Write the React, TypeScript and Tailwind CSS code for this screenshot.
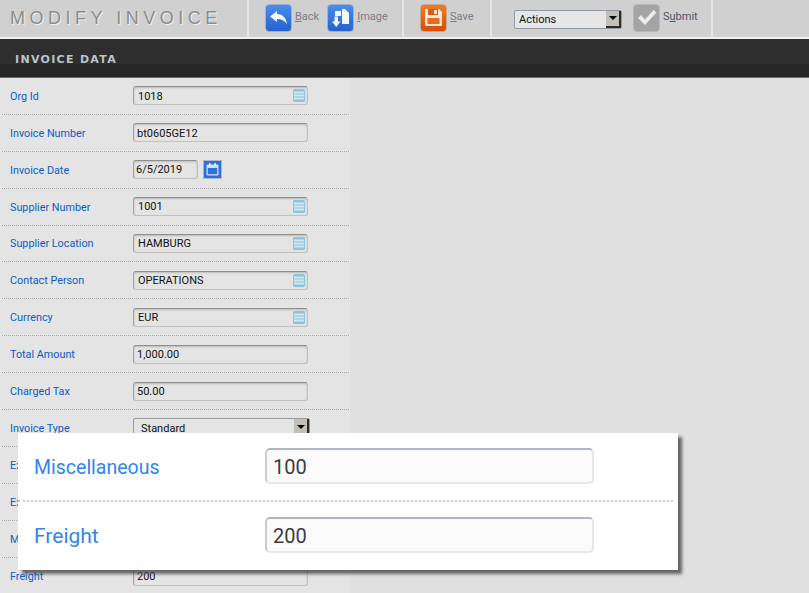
import React from "react";

const ff = "font-['Roboto','Liberation_Sans',sans-serif]";

function IconTile({ tone, children }: { tone: "blue" | "orange" | "gray"; children: React.ReactNode }) {
  const cls =
    tone === "blue"
      ? "bg-gradient-to-b from-[#4a8cf0] to-[#2462cf] border-[#9fb0c8]"
      : tone === "orange"
      ? "bg-gradient-to-b from-[#f07a24] to-[#d94c00] border-[#c8a890]"
      : "bg-[#a4a4a4] border-[#b8b8b8]";
  return (
    <div className={`w-[27px] h-[28px] rounded-[4px] border flex items-center justify-center shrink-0 ${cls}`}>
      {children}
    </div>
  );
}

function ToolBtn({ tone, first, rest, label, children }: { tone: "blue" | "orange" | "gray"; first: string; rest: string; label?: string; children: React.ReactNode }) {
  return (
    <div className="flex items-center gap-[3px]">
      <IconTile tone={tone}>{children}</IconTile>
      <span className={`text-[11px] leading-none mb-[2px] ${tone === "gray" ? "text-[#55556a]" : "text-[#7c7c86]"}`}>
        {label}
        <span className="underline">{first}</span>
        {rest}
      </span>
    </div>
  );
}

function ListIcon() {
  return (
    <svg width="12" height="13" viewBox="0 0 12 13" className="shrink-0">
      <rect x="0" y="0" width="12" height="13" rx="1.5" fill="#8cc4dc" />
      <rect x="1" y="2.5" width="10" height="2" fill="#d4e6ee" />
      <rect x="1" y="5.5" width="10" height="2" fill="#d4e6ee" />
      <rect x="1" y="8.5" width="10" height="2" fill="#d4e6ee" />
    </svg>
  );
}

function DropBtn() {
  return (
    <div className="w-[15px] h-full bg-[#c4bfb6] border-r-2 border-b-2 border-[#2a2a2a] flex items-center justify-center shrink-0">
      <div className="w-0 h-0 border-l-[4px] border-r-[4px] border-t-[4px] border-l-transparent border-r-transparent border-t-black" />
    </div>
  );
}

type Row = { label: string; value: string; kind?: "list" | "date" | "select" | "plain" };

const rows: Row[] = [
  { label: "Org Id", value: "1018", kind: "list" },
  { label: "Invoice Number", value: "bt0605GE12" },
  { label: "Invoice Date", value: "6/5/2019", kind: "date" },
  { label: "Supplier Number", value: "1001", kind: "list" },
  { label: "Supplier Location", value: "HAMBURG", kind: "list" },
  { label: "Contact Person", value: "OPERATIONS", kind: "list" },
  { label: "Currency", value: "EUR", kind: "list" },
  { label: "Total Amount", value: "1,000.00" },
  { label: "Charged Tax", value: "50.00" },
  { label: "Invoice Type", value: "Standard", kind: "select" },
  { label: "Exchange Rate", value: "" },
  { label: "Exchange Date", value: "" },
  { label: "Miscellaneous", value: "100" },
  { label: "Freight", value: "200" },
];

const inputCls =
  "h-[19px] rounded-[3px] border border-[#c0c0c0] border-t-[#8e8e8e] border-l-[#a0a0a0] bg-[#e4e4e4] shadow-[inset_0_1px_2px_rgba(0,0,0,0.18)] flex items-center text-[11px] text-[#111]";

function Field({ row }: { row: Row }) {
  if (row.kind === "date") {
    return (
      <div className="flex items-center gap-[5px]">
        <div className={`w-[65px] pl-[2px] ${inputCls}`}>
          <span className="pt-[2px]">{row.value}</span>
        </div>
        <div className="w-[19px] h-[19px] bg-[#2f6fdc] border border-[#a9b6cc] flex items-center justify-center">
          <svg width="13" height="13" viewBox="0 0 13 13">
            <rect x="0.5" y="1.5" width="12" height="11" rx="1" fill="#cfe0fa" />
            <rect x="1.8" y="5" width="9.4" height="6.2" fill="#2f6fdc" />
            <rect x="3" y="0" width="1.5" height="3" fill="#fff" />
            <rect x="8.5" y="0" width="1.5" height="3" fill="#fff" />
          </svg>
        </div>
      </div>
    );
  }
  if (row.kind === "select") {
    return (
      <div className="w-[177px] h-[19px] rounded-[2px] border border-[#9a9a9a] bg-[#e4e4e4] pl-[7px] flex items-center justify-between text-[11px] text-[#111]">
        <span className="pt-[2px]">{row.value}</span>
        <DropBtn />
      </div>
    );
  }
  return (
    <div className={`w-[175px] pr-[2px] justify-between ${row.kind === "list" ? "pl-[4px]" : "pl-[3px]"} ${inputCls}`}>
      <span className="pt-[2px]">{row.value}</span>
      {row.kind === "list" && <ListIcon />}
    </div>
  );
}

function ZoomInput({ value }: { value: string }) {
  return (
    <div className="w-[329px] h-[36px] shrink-0 rounded-[5px] border-2 border-[#e4e8ec] border-t-[#aeb6c0] border-l-[#c6ccd4] bg-[#fafafa] pl-[6px] pt-[2px] flex items-center text-[20px] text-[#3c3c3c]">
      {value}
    </div>
  );
}

export default function App() {
  return (
    <div className={`relative w-[809px] h-[593px] overflow-hidden bg-[#e0e0e0] ${ff}`}>
      <div className="h-[38px] bg-[#d0d0d0] flex">
        <div className="w-[249px] border-r-2 border-[#e6e6e6] pl-[10px] flex items-center pb-[1px]">
          <span className="font-['Liberation_Sans',sans-serif] text-[18px] tracking-[4.5px] text-[#8c8c8c] [text-shadow:1px_1px_0_#f0f0f0] whitespace-nowrap">
            MODIFY INVOICE
          </span>
        </div>
        <div className="w-[155px] border-r-2 border-[#e6e6e6] flex items-center pl-[16px] gap-[8px] pb-[3px]">
          <ToolBtn tone="blue" first="B" rest="ack">
            <svg width="17" height="13" viewBox="0 0 17 13">
              <path d="M0 5.5 L7 0 V3 C12 3 16 6 17 13 C14.5 9.5 11.5 8 7 8 V11 Z" fill="#f2f6fd" />
            </svg>
          </ToolBtn>
          <ToolBtn tone="blue" first="I" rest="mage">
            <svg width="17" height="18" viewBox="0 0 17 18">
              <path d="M3 2 H9 V7 H3 Z" fill="#f2f6fd" />
              <path d="M10 0 H13 L17 4 V15 H10 V10 Z" fill="#f2f6fd" />
              <path d="M2.5 7.5 H6 V12.5 H8.5 L4.2 18 L0 12.5 H2.5 Z" fill="#f2f6fd" />
            </svg>
          </ToolBtn>
        </div>
        <div className="w-[88px] border-r-2 border-[#e6e6e6] flex items-center pl-[16px] pb-[3px]">
          <ToolBtn tone="orange" first="S" rest="ave">
            <svg width="17" height="17" viewBox="0 0 17 17">
              <path d="M0 1 Q0 0 1 0 H14 L17 3 V16 Q17 17 16 17 H1 Q0 17 0 16 Z" fill="#f8e6d6" />
              <rect x="3" y="0" width="10" height="6" fill="#e05a0c" />
              <rect x="9" y="1" width="3" height="4" fill="#f8e6d6" />
              <rect x="2.5" y="9" width="12" height="6" fill="#e86a1c" />
            </svg>
          </ToolBtn>
        </div>
        <div className="w-[221px] border-r-2 border-[#e6e6e6] flex items-center pl-[22px] gap-[11px] pb-[3px]">
          <div className="w-[108px] h-[19px] mt-[3px] rounded-[2px] border border-[#8f9aa4] bg-[#e6e6e6] pl-[4px] flex items-center justify-between text-[11px] text-[#111] shrink-0">
            <span className="pt-[2px]">Actions</span>
            <DropBtn />
          </div>
          <ToolBtn tone="gray" first="u" rest="bmit" label="S">
            <svg width="20" height="17" viewBox="0 0 20 17">
              <path d="M1 9 L4 6 L8 10.5 L16.5 1 L19.5 3.5 L8 16 Z" fill="#ececec" />
            </svg>
          </ToolBtn>
        </div>
      </div>

      <div className="h-[2px] bg-[#f0f0f0] -mt-[1px]" />
      <div className="h-[39px] border-b border-[#6a6a6a] bg-[linear-gradient(to_bottom,#2e2e2e_0,#2e2e2e_25px,#272727_25px)] pl-[15px] pt-[14px]">
        <span className="block font-['DejaVu_Sans',sans-serif] font-bold text-[11px] leading-[14px] tracking-[1.3px] text-[#bcc4cc]">
          INVOICE DATA
        </span>
      </div>

      <div className="w-[350px] bg-[#e4e4e4] pl-[2px] pr-[1px]">
        {rows.map((r, i) => (
          <div
            key={r.label}
            className={`h-[36.9px] flex items-center ${i < rows.length - 1 ? "border-b border-dotted border-[#a8a8a8]" : ""}`}
          >
            <div className="w-[131px] pl-[8px] pt-[2px] text-[10.8px] text-[#0a5cc8] whitespace-nowrap">{r.label}</div>
            <Field row={r} />
          </div>
        ))}
      </div>

      <div className="absolute left-[18px] top-[433px] w-[660px] h-[137px] bg-white shadow-[4px_4px_3px_rgba(70,70,70,0.8)] pt-[15px]">
        <div className="w-[655px] h-[54px] flex items-start border-b-2 border-dotted border-[#cfcfcf]">
          <div className="w-[247px] pl-[16px] pt-[4px] h-[36px] flex items-center text-[19.5px] text-[#3285ec]">Miscellaneous</div>
          <ZoomInput value="100" />
        </div>
        <div className="w-[655px] pt-[15px] flex items-start">
          <div className="w-[247px] pl-[16px] pt-[4px] h-[36px] flex items-center text-[21px] text-[#3285ec]">Freight</div>
          <ZoomInput value="200" />
        </div>
      </div>
    </div>
  );
}
